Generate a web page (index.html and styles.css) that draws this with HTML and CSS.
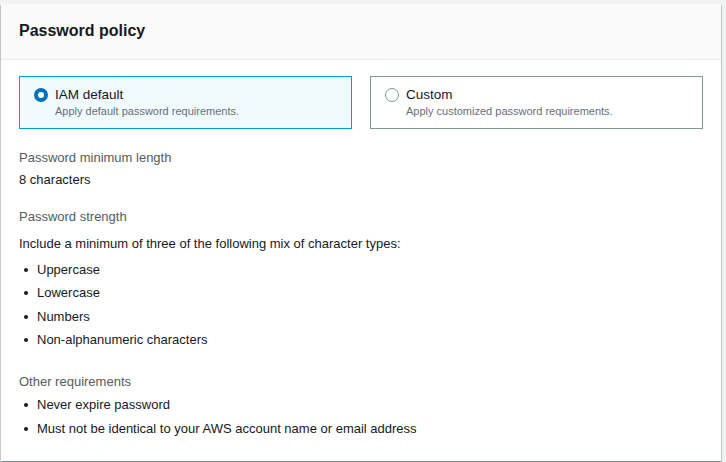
FILE: index.html
```html
<!DOCTYPE html>
<html>
<head>
<meta charset="utf-8">
<link rel="stylesheet" href="styles.css">
</head>
<body>
<div class="card">
  <div class="card-header"><h2 class="title">Password policy</h2></div>
  <div class="card-body">
    <div class="tiles">
      <label class="tile tile-selected">
        <span class="radio radio-checked"></span>
        <span class="tile-text">
          <span class="tile-label">IAM default</span>
          <span class="tile-desc">Apply default password requirements.</span>
        </span>
      </label>
      <label class="tile">
        <span class="radio"></span>
        <span class="tile-text">
          <span class="tile-label">Custom</span>
          <span class="tile-desc">Apply customized password requirements.</span>
        </span>
      </label>
    </div>

    <div class="section first">
      <div class="key">Password minimum length</div>
      <div class="value">8 characters</div>
    </div>

    <div class="section">
      <div class="key">Password strength</div>
      <div class="value intro">Include a minimum of three of the following mix of character types:</div>
      <ul class="list list-strength">
        <li>Uppercase</li>
        <li>Lowercase</li>
        <li>Numbers</li>
        <li>Non-alphanumeric characters</li>
      </ul>
    </div>

    <div class="section other">
      <div class="key">Other requirements</div>
      <ul class="list">
        <li>Never expire password</li>
        <li>Must not be identical to your AWS account name or email address</li>
      </ul>
    </div>
  </div>
</div>
</body>
</html>
```

FILE: styles.css
```css
html, body {
  margin: 0;
  padding: 0;
  background: #f2f3f3;
}
body {
  padding: 4px 5px 1px 1px;
  font-family: "Liberation Sans", Arial, sans-serif;
  color: #16191f;
  font-size: 14px;
}
.card {
  background: #ffffff;
  height: 457px;
  box-sizing: border-box;
  box-shadow: 0 1px 1px 0 rgba(0, 28, 36, 0.3), 1px 1px 1px 0 rgba(0, 28, 36, 0.15), -1px 1px 1px 0 rgba(0, 28, 36, 0.15);
}
.card-header {
  background: #fafafa;
  height: 56px;
  box-sizing: border-box;
  border-bottom: 1px solid #eaeded;
  display: flex;
  align-items: center;
  padding: 0 18px 1px 18px;
}
.title {
  margin: 0;
  font-size: 16px;
  font-weight: 700;
  color: #16191f;
}
.card-body {
  padding: 16px 18px 0 18px;
}
.tiles {
  display: grid;
  grid-template-columns: 1fr 1fr;
  gap: 18px;
}
.tile {
  height: 53px;
  box-sizing: border-box;
  border: 1px solid #879596;
  display: flex;
  align-items: flex-start;
  padding: 9px 14px 0 14px;
  gap: 7px;
}
.tile-selected {
  border-color: #00a1c9;
  background: #f1faff;
}
.radio {
  width: 14px;
  height: 14px;
  box-sizing: border-box;
  border-radius: 50%;
  border: 1.5px solid #879596;
  margin-top: 2px;
  flex: none;
}
.radio-checked {
  border: 4px solid #0073bb;
  background: #fff;
}
.tile-text {
  display: flex;
  flex-direction: column;
}
.tile-label {
  font-size: 13.5px;
  line-height: 17px;
  color: #16191f;
}
.tile-desc {
  font-size: 11px;
  line-height: 17px;
  color: #687078;
}
.section {
  margin-top: 15px;
}
.section.first {
  margin-top: 18px;
}
.section.other {
  margin-top: 20px;
}
.key {
  font-size: 13px;
  line-height: 22px;
  color: #545b64;
}
.value {
  font-size: 13px;
  line-height: 22px;
}
.intro {
  margin-top: 5px;
}
.list {
  margin: 0;
  padding: 0;
  list-style: none;
}
.list li {
  position: relative;
  padding-left: 18px;
  font-size: 13px;
  line-height: 23.34px;
}
.list li::before {
  content: "";
  position: absolute;
  left: 5px;
  top: 10px;
  width: 4px;
  height: 4px;
  border-radius: 50%;
  background: #16191f;
}
.list-strength {
  margin-top: 3px;
}
```
